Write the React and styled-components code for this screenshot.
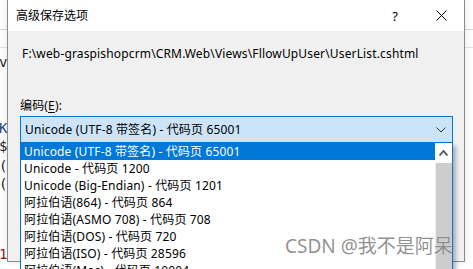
import React from "react";
import styled, { createGlobalStyle } from "styled-components";

const encodings = [
  "Unicode (UTF-8 带签名) - 代码页 65001",
  "Unicode - 代码页 1200",
  "Unicode (Big-Endian) - 代码页 1201",
  "阿拉伯语(864) - 代码页 864",
  "阿拉伯语(ASMO 708) - 代码页 708",
  "阿拉伯语(DOS) - 代码页 720",
  "阿拉伯语(ISO) - 代码页 28596",
  "阿拉伯语(Mac) - 代码页 10004",
];

// bits of the editor window that peek out from behind the dialog
const edgeLines = [
  { text: "v", gap: 53, color: "#1e1e1e" },
  { text: "K", gap: 48, color: "#1f3f7a" },
  { text: "$", gap: 0, color: "#1e1e1e" },
  { text: "(", gap: 2, color: "#1e1e1e" },
  { text: "(", gap: 0, color: "#1e1e1e" },
  { text: "1", gap: 52, color: "#a31515" },
];

const GlobalStyle = createGlobalStyle`
  html, body {
    margin: 0;
    padding: 0;
    background: #ffffff;
  }
  body {
    font-family: "Noto Sans", "Noto Sans CJK SC", sans-serif;
    font-size: 12px;
  }
`;

const Desktop = styled.div`
  position: relative;
  width: 473px;
  height: 269px;
  overflow: hidden;
  background: #ffffff;
`;

const BackLine = styled.div`
  position: absolute;
  left: 0;
  right: 0;
  top: ${(p) => p.$top}px;
  height: 1px;
  background: ${(p) => p.$color};
`;

const EdgeColumn = styled.div`
  position: absolute;
  left: -1px;
  top: 0;
  width: 10px;
  display: flex;
  flex-direction: column;
  font-family: "DejaVu Sans Mono", monospace;
  font-size: 14px;
`;

const EdgeLine = styled.div`
  height: 18px;
  line-height: 18px;
  margin-top: ${(p) => p.$gap}px;
  color: ${(p) => p.$color};
`;

const Window = styled.div`
  position: absolute;
  left: 7px;
  top: -1px;
  width: 456px;
  height: 261px;
  border: 1px solid #8c8c8c;
  background: #f0f0f0;
  box-shadow: 0 0 6px rgba(0, 0, 0, 0.12);
  display: flex;
  flex-direction: column;
`;

const TitleBar = styled.div`
  height: 31px;
  flex: none;
  background: #ffffff;
  display: flex;
  align-items: center;
  padding-left: 8px;
`;

const Title = styled.div`
  flex: 1;
  color: #000;
  font-size: 12px;
  line-height: 16px;
`;

const TitleButton = styled.div`
  width: 46px;
  height: 31px;
  display: flex;
  align-items: center;
  justify-content: center;
  color: #000;
  font-size: 13px;
`;

const Body = styled.div`
  flex: 1;
  display: flex;
  flex-direction: column;
  padding: 15px 11px 0 12px;
  letter-spacing: 0.15px;
`;

const PathText = styled.div`
  padding-left: 2px;
  line-height: 16px;
  color: #000;
  white-space: nowrap;
`;

const FieldLabel = styled.div`
  margin-top: 36px;
  line-height: 16px;
  color: #000;
  u {
    text-decoration: underline;
    text-underline-offset: 2px;
  }
`;

const ComboWrap = styled.div`
  position: relative;
  margin-top: 2px;
  width: 433px;
`;

const Combo = styled.div`
  height: 25px;
  border: 1px solid #0078d7;
  background: #cce4f7;
  display: flex;
  align-items: center;
  padding: 0 0 0 4px;
  color: #000;
`;

const ComboText = styled.div`
  flex: 1;
  line-height: 16px;
  white-space: nowrap;
`;

const Chevron = styled.svg`
  width: 10px;
  height: 6px;
  margin-right: 6px;
`;

const DropList = styled.div`
  position: absolute;
  left: 0;
  top: 100%;
  width: 431px;
  height: 140px;
  background: #ffffff;
  border-left: 1px solid #0078d7;
  border-right: 1px solid #0078d7;
  box-shadow: 3px 3px 4px rgba(0, 0, 0, 0.28);
  display: flex;
  overflow: hidden;
`;

const Options = styled.div`
  flex: 1;
  display: flex;
  flex-direction: column;
`;

const Option = styled.div`
  height: 17px;
  line-height: 17px;
  padding-left: 3px;
  white-space: nowrap;
  color: ${(p) => (p.$selected ? "#ffffff" : "#000000")};
  background: ${(p) => (p.$selected ? "#0078d7" : "transparent")};
`;

const ScrollBar = styled.div`
  width: 17px;
  display: flex;
  flex-direction: column;
  background: #f0f0f0;
`;

const ScrollButton = styled.div`
  height: 20px;
  display: flex;
  align-items: center;
  justify-content: center;
  background: #ffffff;
`;

const ScrollThumb = styled.div`
  flex: 1;
  margin-left: 1px;
  background: #cdcdcd;
`;

const Watermark = styled.div`
  position: absolute;
  left: 285px;
  top: 234px;
  font-family: "Noto Sans", "Noto Sans CJK SC", sans-serif;
  font-size: 19px;
  line-height: 24px;
  color: rgba(125, 125, 125, 0.85);
  text-shadow: 0 0 1px rgba(255, 255, 255, 0.6);
  white-space: nowrap;
`;

export default function App() {
  return (
    <>
      <GlobalStyle />
      <Desktop>
        <BackLine $top={29} $color="#d6d6d6" />
        <BackLine $top={47} $color="#e4e4e4" />
        <EdgeColumn>
          {edgeLines.map((line, i) => (
            <EdgeLine key={i} $gap={line.gap} $color={line.color}>
              {line.text}
            </EdgeLine>
          ))}
        </EdgeColumn>

        <Window>
          <TitleBar>
            <Title>高级保存选项</Title>
            <TitleButton>?</TitleButton>
            <TitleButton>
              <svg width="11" height="11" viewBox="0 0 11 11">
                <path d="M0.5 0.5 L10.5 10.5 M10.5 0.5 L0.5 10.5" stroke="#000" strokeWidth="1" fill="none" />
              </svg>
            </TitleButton>
          </TitleBar>
          <Body>
            <PathText>F:\web-graspishopcrm\CRM.Web\Views\FllowUpUser\UserList.cshtml</PathText>
            <FieldLabel>
              编码(<u>E</u>):
            </FieldLabel>
            <ComboWrap>
              <Combo>
                <ComboText>{encodings[0]}</ComboText>
                <Chevron viewBox="0 0 10 6">
                  <path d="M0.5 0.5 L5 5 L9.5 0.5" stroke="#333" strokeWidth="1" fill="none" />
                </Chevron>
              </Combo>
              <DropList>
                <Options>
                  {encodings.map((name, i) => (
                    <Option key={name} $selected={i === 0}>
                      {name}
                    </Option>
                  ))}
                </Options>
                <ScrollBar>
                  <ScrollButton>
                    <svg width="9" height="6" viewBox="0 0 9 6">
                      <path d="M0.5 5.5 L4.5 1 L8.5 5.5" stroke="#555" strokeWidth="1.8" fill="none" />
                    </svg>
                  </ScrollButton>
                  <ScrollThumb />
                </ScrollBar>
              </DropList>
            </ComboWrap>
          </Body>
        </Window>

        <Watermark>CSDN @我不是阿呆</Watermark>
      </Desktop>
    </>
  );
}
